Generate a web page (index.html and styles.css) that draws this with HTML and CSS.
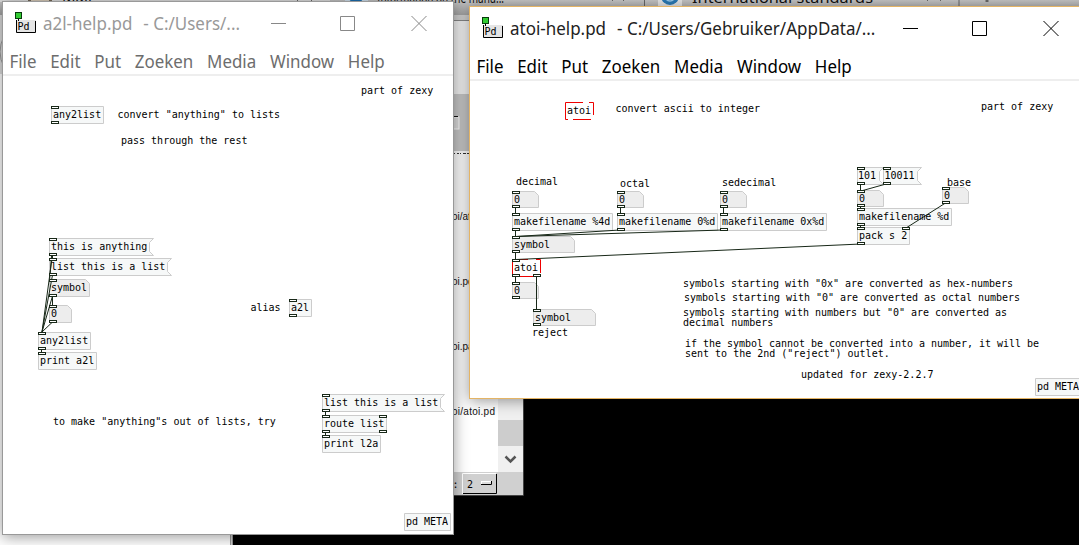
FILE: index.html
```html
<!DOCTYPE html>
<html lang="nl">
<head>
<meta charset="utf-8">
<title>atoi-help.pd</title>
<link rel="stylesheet" href="styles.css">
</head>
<body>
<div class="desktop">
  <svg class="backdrop" width="1079" height="545" viewBox="0 0 1079 545">
    <defs>
      <linearGradient id="strip" x1="0" y1="0" x2="0" y2="1"><stop offset="0" stop-color="#c4c4c4"/><stop offset="1" stop-color="#a4a4a4"/></linearGradient>
    </defs>
    <rect width="1079" height="545" fill="#000"/>
    <rect width="231" height="545" fill="#fff"/>
    <rect width="3" height="14" fill="#bbb"/>
    <rect y="14" width="3" height="60" fill="#ddd"/>
    <path d="M4 36Q-4 52 4 67" fill="none" stroke="#999"/>
    <rect x="230" y="500" width="3" height="45" fill="#999"/>
    <rect x="231" y="500" width="1" height="45" fill="#d0d0d0"/>
    <rect width="1079" height="15" fill="url(#strip)"/>
    <rect y="0" width="330" height="2" fill="#ddd"/>
    <rect x="28" y="0" width="24" height="2" fill="#756957"/>
    <rect x="31" y="0" width="18" height="1" fill="#d8cbb8"/>
    <rect x="345" y="-8" width="23" height="12" fill="#cfe0ee"/>
    <circle cx="356" cy="-5" r="8" fill="#1d6fb0"/>
    <rect x="658" y="-8" width="24" height="14" fill="#e4e4e4"/>
    <circle cx="670" cy="-4" r="9" fill="#2a7ab5"/>
    <circle cx="670" cy="-4" r="5" fill="none" stroke="#9cc9e8" stroke-width="1.5"/>
    <g class="tabtext">
      <text x="62" y="2">Mail</text>
      <text x="377" y="3" textLength="127" lengthAdjust="spacingAndGlyphs">Information on the manu...</text>
      <text x="692" y="3" textLength="181" lengthAdjust="spacingAndGlyphs">International standards</text>
    </g>
    <g stroke="#666" fill="none"><path d="M297.500 0V2M311.500 0V2M612 1l3-3M624 1l-3-3M927 1l3-3M941 1l-3-3M644.500 0V6M959 0V6"/><path d="M987 0V2" stroke-width="3"/></g>
    <rect x="453" y="15" width="17" height="6" fill="#d0d0d0"/>
    <rect x="453" y="20" width="17" height="1" fill="#888"/>
    <rect x="453" y="21" width="17" height="73" fill="#f3f3f3"/>
    <rect x="453" y="94" width="70" height="57" fill="#c8c8c8"/>
    <rect x="450" y="117" width="9" height="12" fill="#ddd" stroke="#fff"/>
    <path d="M450 116.500H458" stroke="#111"/>
    <rect x="450" y="151" width="48" height="322" fill="#fff"/>
    <rect x="498" y="151" width="25" height="322" fill="#f0f0f0"/>
    <rect x="498" y="420" width="25" height="26" fill="#cdcdcd"/>
    <path d="M505.500 456.500l5 5 5-5" fill="none" stroke="#555" stroke-width="2.500"/>
    <rect x="450" y="472" width="73" height="23" fill="#d0d0d0"/>
    <path d="M462.500 494V473.500H496" fill="none" stroke="#fff"/>
    <path d="M463 493.500H496.500V474" fill="none" stroke="#000"/>
    <rect x="481.500" y="481.500" width="10" height="3" fill="#ddd" stroke="#fff"/>
    <path d="M481 484.500H491.500V481" fill="none" stroke="#000"/>
    <path d="M453 495.500H523.500V399" fill="none" stroke="#444"/>
    <g class="filetext">
      <text x="452" y="219.500">oi/atoi</text>
      <text x="452" y="285">oi.pd</text>
      <text x="452" y="350">oi.pat</text>
      <text x="452" y="415" textLength="43">oi/atoi.pd</text>
      <path d="M453 153.500h2m2 0h2m1 0h1m2 0h3m1 0h2" stroke="#333"/>
    </g>
    <g class="mono"><text x="452.500" y="488">:</text><text x="467" y="488">2</text></g>
  </svg>

  <section class="window inactive">
    <header class="titlebar">
      <svg class="logo" width="22" height="22" viewBox="0 0 22 22"><rect x="1" y="8" width="20" height="12" fill="#e5e5e5"/><path d="M1.500 8V20.500H20.500V9" fill="none" stroke="#000"/><path d="M3.500 6V9" stroke="#000"/><rect x=".5" y=".5" width="6" height="6" fill="#3c3" stroke="#063b0b"/><text x="2.500" y="18">Pd</text></svg>
      <h1 class="title"><span>a2l-help.pd</span><span>- C:/Users/...</span></h1>
      <svg class="controls" width="140" height="20" viewBox="0 0 140 20"><path d="M0 9.500H15M69.500 2.500h14v14h-14zM140.500 2l15 15M155.500 2l-15 15"/></svg>
    </header>
    <nav class="menu"><span>File</span><span>Edit</span><span>Put</span><span>Zoeken</span><span>Media</span><span>Window</span><span>Help</span></nav>
    <svg class="patch" width="450" height="458" viewBox="3 76 450 458">
      <defs><g id="p"><rect x=".5" y=".5" width="7" height="2"/></g></defs>
      <g class="box">
        <path d="M51.500 106.500h52v17h-52zM38.500 332.500h52v17h-52zM38.500 352.500h58v17h-58zM289.500 299.500h22v17h-22zM322.500 415.500h64v17h-64zM322.500 435.500h58v17h-58zM404.500 513.500h46v17h-46z"/>
        <path d="M49.500 238.500h104l-4 4v9l4 4h-104zM49.500 258.500h122l-4 4v9l4 4h-122zM322.500 394.500h122l-4 4v9l4 4h-122z"/>
        <path class="atom" d="M49.500 279.500h36l4 4v13h-40zM49.500 305.500h18l4 4v13h-22z"/>
      </g>
      <g class="wire"><path d="M52.500 255V258M52.500 255L42 332M52.500 275L42 332M52.500 296L42 332M52.500 296V305M52.500 322L42 332M41.500 349V353M325.500 411V415M325.500 432V436M51.500 256L49.500 281"/></g>
      <g class="port">
        <use href="#p" x="51" y="106"/><use href="#p" x="51" y="121"/>
        <use href="#p" x="49" y="238"/><use href="#p" x="49" y="253"/><use href="#p" x="49" y="258"/><use href="#p" x="49" y="273"/><use href="#p" x="49" y="279"/><use href="#p" x="49" y="294"/><use href="#p" x="49" y="305"/><use href="#p" x="49" y="320"/>
        <use href="#p" x="38" y="332"/><use href="#p" x="38" y="347"/><use href="#p" x="38" y="352"/>
        <use href="#p" x="289" y="299"/><use href="#p" x="289" y="314"/>
        <use href="#p" x="322" y="394"/><use href="#p" x="322" y="409"/><use href="#p" x="322" y="415"/><use href="#p" x="379" y="415"/><use href="#p" x="322" y="430"/><use href="#p" x="379" y="430"/><use href="#p" x="322" y="435"/>
      </g>
      <g class="mono">
        <text x="361" y="94">part of zexy</text>
        <text x="53" y="118">any2list</text><text x="117.500" y="118">convert "anything" to lists</text>
        <text x="121" y="144">pass through the rest</text>
        <text x="51" y="250">this is anything</text><text x="51" y="270">list this is a list</text>
        <text x="51" y="291">symbol</text><text x="51" y="317">0</text>
        <text x="40" y="344">any2list</text><text x="40" y="364">print a2l</text>
        <text x="250.500" y="311">alias</text><text x="291" y="311">a2l</text>
        <text x="53" y="425">to make "anything"s out of lists, try</text>
        <text x="324" y="406">list this is a list</text><text x="324" y="427">route list</text><text x="324" y="447">print l2a</text>
        <text x="406" y="525">pd META</text>
      </g>
    </svg>
  </section>

  <section class="window active">
    <header class="titlebar">
      <svg class="logo" width="22" height="22" viewBox="0 0 22 22"><rect x="1" y="8" width="20" height="12" fill="#e5e5e5"/><path d="M1.500 8V20.500H20.500V9" fill="none" stroke="#000"/><path d="M3.500 6V9" stroke="#000"/><rect x=".5" y=".5" width="6" height="6" fill="#3c3" stroke="#063b0b"/><text x="2.500" y="18">Pd</text></svg>
      <h1 class="title"><span>atoi-help.pd</span><span>- C:/Users/Gebruiker/AppData/...</span></h1>
      <svg class="controls" width="140" height="20" viewBox="0 0 140 20"><path d="M0 9.500H15M69.500 2.500h14v14h-14zM140.500 2l15 15M155.500 2l-15 15"/></svg>
    </header>
    <nav class="menu"><span>File</span><span>Edit</span><span>Put</span><span>Zoeken</span><span>Media</span><span>Window</span><span>Help</span></nav>
    <svg class="patch" width="609" height="317" viewBox="470 81 609 317">
      <g class="box">
        <path d="M512.500 213.500h100v17h-100zM617.500 213.500h100v17h-100zM720.500 213.500h106v17h-106zM857.500 208.500h94v17h-94zM857.500 227.500h52v17h-52zM1035.500 378.500h50v17h-50z"/>
        <path d="M857.500 167.500h26l-4 4v9l4 4h-26zM883.500 167.500h38l-4 4v9l4 4h-38z"/>
        <path class="atom" d="M512.500 191.500h22l4 4v12h-26zM617.500 191.500h22l4 4v12h-26zM720.500 191.500h22l4 4v12h-26zM512.500 236.500h58l4 4v12h-62zM512.500 282.500h22l4 4v12h-26zM533.500 309.500h58l4 4v12h-62zM857.500 190.500h22l4 4v12h-26zM942.500 187.500h22l4 4v12h-26z"/>
      </g>
      <path class="broken" d="M583 102.500H565.500V119.500H568M573 119.500H591M593.500 115V102.500H589M528 259.500H512.500V276.500H534M540.500 273V259.500H536"/>
      <g class="wire"><path d="M515.500 208V214M620.500 208V214M723.500 208V214M515.500 230V236M515.500 252V259M515.500 276V282M536.500 276V309M620 230L516 236.500M723 230L516 236.500M861 244L516 259.500M860.500 184V190M886 184L861 191M860.500 206V209M860.500 225V228M945.500 203L906 228"/></g>
      <g class="port">
        <use href="#p" x="512" y="191"/><use href="#p" x="512" y="205"/><use href="#p" x="617" y="191"/><use href="#p" x="617" y="205"/><use href="#p" x="720" y="191"/><use href="#p" x="720" y="205"/>
        <use href="#p" x="512" y="213"/><use href="#p" x="512" y="228"/><use href="#p" x="617" y="213"/><use href="#p" x="617" y="228"/><use href="#p" x="720" y="213"/><use href="#p" x="720" y="228"/>
        <use href="#p" x="512" y="236"/><use href="#p" x="512" y="250"/><use href="#p" x="512" y="259"/><use href="#p" x="512" y="274"/><use href="#p" x="533" y="274"/><use href="#p" x="512" y="282"/><use href="#p" x="512" y="296"/><use href="#p" x="533" y="309"/><use href="#p" x="533" y="323"/>
        <use href="#p" x="857" y="167"/><use href="#p" x="857" y="182"/><use href="#p" x="883" y="167"/><use href="#p" x="883" y="182"/><use href="#p" x="857" y="190"/><use href="#p" x="857" y="204"/><use href="#p" x="857" y="208"/><use href="#p" x="857" y="223"/><use href="#p" x="857" y="227"/><use href="#p" x="902" y="227"/><use href="#p" x="857" y="242"/><use href="#p" x="942" y="187"/><use href="#p" x="942" y="201"/>
      </g>
      <g class="mono">
        <text x="567" y="114">atoi</text><text x="615.500" y="112">convert ascii to integer</text><text x="981" y="110">part of zexy</text>
        <text x="516" y="185">decimal</text><text x="620" y="187">octal</text><text x="722" y="186">sedecimal</text>
        <text x="514" y="203">0</text><text x="619" y="203">0</text><text x="722" y="203">0</text>
        <text x="514" y="225">makefilename %4d</text><text x="619" y="225">makefilename 0%d</text><text x="722" y="225">makefilename 0x%d</text>
        <text x="514" y="248">symbol</text><text x="514" y="271">atoi</text><text x="514" y="294">0</text><text x="535" y="321">symbol</text><text x="532" y="336">reject</text>
        <text x="858" y="179">101</text><text x="884.500" y="179">10011</text><text x="859" y="202">0</text><text x="859" y="220">makefilename %d</text><text x="859" y="239">pack s 2</text>
        <text x="947" y="186">base</text><text x="944" y="199">0</text>
        <text x="683" y="287" textLength="330">symbols starting with "0x" are converted as hex-numbers</text>
        <text x="684" y="301" textLength="336">symbols starting with "0" are converted as octal numbers</text>
        <text x="683" y="316" textLength="324">symbols starting with numbers but "0" are converted as</text>
        <text x="683" y="326">decimal numbers</text>
        <text x="685" y="347" textLength="354">if the symbol cannot be converted into a number, it will be</text>
        <text x="685" y="357">sent to the 2nd ("reject") outlet.</text>
        <text x="801" y="378">updated for zexy-2.2.7</text>
        <text x="1037" y="390">pd META</text>
      </g>
    </svg>
  </section>
</div>
</body>
</html>
```
FILE: styles.css
```css
body { margin: 0; overflow: hidden; }
.desktop { position: relative; width: 1079px; height: 545px; overflow: hidden; background: #000; }
.backdrop { display: block; }
.window {
  position: absolute;
  box-sizing: border-box;
  display: flex;
  flex-direction: column;
  background: #fff;
  font-family: "Noto Sans", sans-serif;
  box-shadow: 0 2px 14px rgba(0, 0, 0, .4);
}
.inactive { left: 2px; top: 1px; width: 452px; height: 534px; border: 1px solid #999; color: #999; }
.active { left: 469px; top: 6px; width: 640px; height: 393px; border: 1px solid #e4b465; color: #222; }
.titlebar { display: flex; height: 46px; flex: none; padding-left: 12px; }
.logo { flex: none; margin-top: 10px; }
.logo text { font: 10px "DejaVu Sans Mono", monospace; fill: #000; }
.title {
  flex: none;
  display: flex;
  gap: 12px;
  width: 254px;
  margin: 8px 0 0 6px;
  font-size: 18.5px;
  line-height: 26px;
  font-weight: 400;
  white-space: pre;
  transform: scaleX(.917);
  transform-origin: left;
}
.inactive .title { width: 228px; }
.active .title { width: 393px; }
.controls { flex: none; overflow: visible; margin-top: 12px; }
.controls path { fill: none; stroke: #888; }
.active .controls path { stroke: #000; }
.menu {
  display: flex;
  flex: none;
  gap: 15px;
  height: 28px;
  padding-left: 7px;
  line-height: 26px;
  font-size: 18.5px;
  color: #6d6d6d;
  transform: scaleX(.915);
  transform-origin: left;
}
.active .menu { color: #000; }
.patch { display: block; flex: none; box-shadow: 0 -1px #eee, 0 -2px #eee; }
.mono { font: 10px "DejaVu Sans Mono", monospace; fill: #000; white-space: pre; }
.filetext { font: 10px "Liberation Sans", sans-serif; fill: #111; }
.tabtext { font: 15px "Noto Sans", sans-serif; fill: #111; }
.box path { fill: #f6f8f8; stroke: #ccc; }
.box .atom { fill: #ededed; }
.port { fill: #fff; stroke: #182818; }
.wire { fill: none; stroke: #182818; }
.broken { fill: none; stroke: #e00; }
```
